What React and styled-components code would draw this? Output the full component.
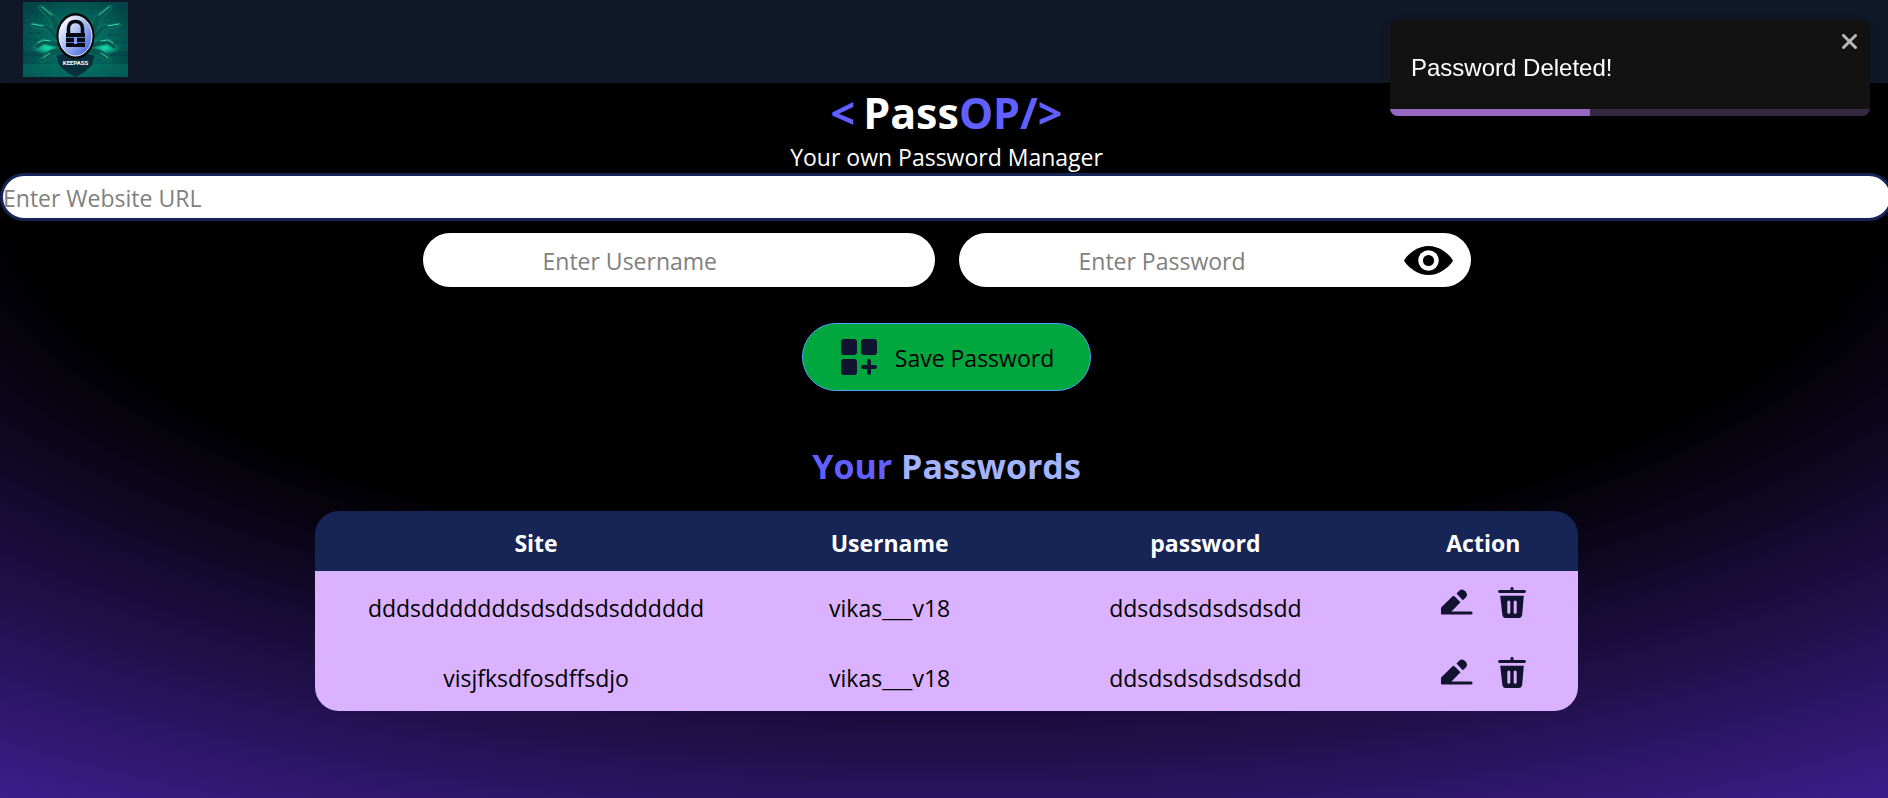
import React, { useState } from "react";
import styled, { createGlobalStyle } from "styled-components";

const Global = createGlobalStyle`
  *, *::before, *::after { box-sizing: border-box; }
  html { background: #000; }
  body {
    margin: 0;
    overflow-x: hidden;
    font-family: "Open Sans", "Noto Sans", sans-serif;
    font-size: 23px;
    line-height: 32px;
    color: #000;
  }
  h1, h2, p { margin: 0; }
  button, input { font: inherit; }
`;

const Page = styled.div`
  width: calc(100% + 5px);
  min-height: 100vh;
  background: radial-gradient(125% 125% at 50% 10%, #000 40%, #63e 100%) 0 83px / 100% 800px no-repeat;
`;

const Nav = styled.nav`
  height: 83px;
  padding: 2px 23px;
  background: #101828;
`;

const Logo = styled.svg`
  display: block;
  width: 105px;
  height: 75px;
`;

const Brand = styled.h1`
  display: flex;
  justify-content: center;
  gap: 8px;
  padding-top: 2px;
  font-size: 43px;
  line-height: 56px;
  font-weight: 700;
  color: #fff;
`;

const Accent = styled.span`
  color: ${(p) => p.$color || "#615fff"};
`;

const Tagline = styled.p`
  text-align: center;
  color: #fff;
`;

const Form = styled.form`
  display: flex;
  flex-direction: column;
  align-items: center;
`;

const UrlInput = styled.input`
  width: 100%;
  height: 48px;
  padding: 2px 0 0;
  border: 3px solid #162456;
  border-radius: 24px;
  background: #fff;
  outline: none;
  &::placeholder { color: #808080; opacity: 1; }
`;

const Fields = styled.div`
  display: flex;
  gap: 24px;
  margin-top: 12px;
`;

const Field = styled.div`
  display: flex;
  align-items: center;
  width: 512px;
  height: 54px;
  padding: 0 18px 0 120px;
  border-radius: 27px;
  background: #fff;
`;

const FieldInput = styled.input`
  flex: 1;
  min-width: 0;
  height: 100%;
  padding: 2px 0 0;
  border: 0;
  background: none;
  outline: none;
  &::placeholder { color: #808080; opacity: 1; }
`;

const IconButton = styled.button`
  display: flex;
  padding: 0;
  border: 0;
  background: none;
  color: ${(p) => p.$color || "#121331"};
  cursor: pointer;
`;

const SaveButton = styled.button`
  display: flex;
  align-items: center;
  gap: 18px;
  height: 68px;
  margin-top: 36px;
  padding: 0 36px 0 38px;
  border: 1px solid #51a2ff;
  border-radius: 34px;
  background: #00a63e;
  color: #000;
  cursor: pointer;
`;

const SaveLabel = styled.span`
  padding-top: 2px;
`;

const Heading = styled.h2`
  margin: 51px 0 21px;
  text-align: center;
  font-size: 34px;
  line-height: 48px;
  color: #615fff;
`;

const Table = styled.table`
  width: 1263px;
  max-width: 100%;
  margin: 0 auto;
  table-layout: fixed;
  border-collapse: collapse;
  border-radius: 24px;
  overflow: hidden;
  text-align: center;
`;

const Th = styled.th`
  width: ${(p) => p.$width};
  height: 60px;
  padding: 3px 0 0;
  background: #162456;
  color: #fff;
  font-weight: 700;
`;

const Td = styled.td`
  height: 70px;
  padding: 3px 0 0;
  background: #dab2ff;
`;

const Actions = styled.div`
  display: flex;
  justify-content: center;
  gap: 25px;
  padding-bottom: 11px;
`;

const Toast = styled.div`
  position: fixed;
  top: 20px;
  right: 18px;
  display: flex;
  flex-direction: column;
  width: 480px;
  height: 96px;
  border-radius: 8px;
  overflow: hidden;
  background: #121212;
  color: #fff;
  font-family: "Liberation Sans", Arial, sans-serif;
  font-size: 24px;
  box-shadow: 0 4px 12px rgba(0, 0, 0, 0.1);
`;

const ToastBody = styled.div`
  flex: 1;
  display: flex;
  justify-content: space-between;
  align-items: flex-start;
  padding: 14px 13px 0 21px;
`;

const ToastText = styled.span`
  padding-top: 17px;
  line-height: 34px;
`;

const Track = styled.div`
  height: 7px;
  background: #33283f;
`;

const Bar = styled.div`
  height: 100%;
  background: #9668c4;
`;

const Plus = () => (
  <svg width="36" height="36" viewBox="0 0 36 36" fill="#121331" aria-hidden="true">
    <rect width="16" height="16" rx="3" />
    <rect x="20" width="16" height="16" rx="3" />
    <rect y="20" width="16" height="16" rx="3" />
    <path d="M28 22v12M22 28h12" stroke="#121331" strokeWidth="4" strokeLinecap="round" />
  </svg>
);

const Eye = () => (
  <svg width="49" height="29" viewBox="0 0 49 29" aria-hidden="true">
    <path d="M0 14.500Q2.500 9.500 10 4.500Q17 0 24.500 0Q32 0 39 4.500Q46.500 9.500 49 14.500Q46.500 19.500 39 24.500Q32 29 24.500 29Q17 29 10 24.500Q2.500 19.500 0 14.500Z" fill="#000" />
    <circle cx="24.500" cy="14.500" r="10.300" fill="#fff" />
    <circle cx="24.500" cy="14.500" r="5.600" fill="#000" />
  </svg>
);

const Pencil = () => (
  <svg width="32" height="31" viewBox="0 0 32 31" fill="currentColor" aria-hidden="true">
    <path d="M13.500 9.200L19.500 15.300L10.500 24.500H30.300Q31.600 24.700 31.600 26Q31.600 27.400 30.300 27.500H1Q0 27.500 0 26.500V21.500Q0 20.700 .6 20.100L11.600 9.200Q12.500 8.300 13.500 9.200Z" />
    <path d="M15.500 6.500L18 4Q21 1 24.300 4.200Q27.500 7.500 24.800 10.500L21.800 13.300Z" />
  </svg>
);

const Trash = () => (
  <svg width="28" height="31" viewBox="0 0 28 31" fill="currentColor" aria-hidden="true">
    <path d="M12.500 3V1.400Q12.600 0 14 0Q15.400 0 15.500 1.400V3H26.500Q28 3.100 28 4.500Q28 5.900 26.500 6H1.500Q0 5.900 0 4.500Q0 3.100 1.500 3Z" />
    <path fillRule="evenodd" d="M2.200 8.700H25.800L24.200 27.500Q23.800 30.800 21 31H7.500Q4.700 30.800 4.300 27.500ZM9.300 15V25.200a1.500 1.500 0 0 0 3 0V15a1.500 1.500 0 0 0-3 0ZM15.700 15V25.200a1.500 1.500 0 0 0 3 0V15a1.500 1.500 0 0 0-3 0Z" />
  </svg>
);

const Hand = (props) => (
  <g {...props} fill="#07594f" stroke="#0c9580" strokeWidth="0.500" strokeLinejoin="round">
    <path d="M16 4Q18 2 21 5L32 13Q35 17 36 22L41 33L35 37L30 27Q29 20 26 17L17 8Z" />
    <path d="M7 23Q9 20 14 22L24 23Q30 25 33 31L41 37L38 42L29 34Q25 27 21 27L12 26Z" />
    <path d="M12 44Q14 39 20 37L31 39L41 42L40 47L29 44L21 42L14 47Q11 47 12 44Z" />
    <path d="M17 57Q19 53 27 48L38 45L42 51L30 54L20 60Q16 60 17 57Z" />
    <path d="M19 5L29 13M9 22L20 24M15 41L20 38L27 39M20 56L27 51" fill="none" stroke="#35dcb5" strokeWidth="1" strokeLinecap="round" />
  </g>
);

const KeePassLogo = () => (
  <Logo viewBox="0 0 105 75" role="img" aria-label="KeePass">
    <defs>
      <radialGradient id="scene" cx="50%" cy="52%" r="62%">
        <stop offset="0" stopColor="#08806e" />
        <stop offset="0.600" stopColor="#045f58" />
        <stop offset="1" stopColor="#034548" />
      </radialGradient>
      <linearGradient id="badge" x1="0" y1="0" x2="1" y2="1">
        <stop offset="0.150" stopColor="#f4f7ff" />
        <stop offset="0.900" stopColor="#4468dd" />
      </linearGradient>
      <radialGradient id="glow">
        <stop offset="0" stopColor="#18e0b0" />
        <stop offset="1" stopColor="#18e0b0" stopOpacity="0" />
      </radialGradient>
    </defs>
    <rect width="105" height="75" fill="url(#scene)" />
    <path d="M0 52H105" stroke="#034148" strokeWidth="5" opacity="0.600" />
    <path d="M5 31H20M85 33H102M3 38H15M90 40H103" stroke="#034148" strokeWidth="2" strokeDasharray="5 3" opacity="0.600" />
    <path d="M0 62H105V75H0Z" fill="#07816f" opacity="0.400" />
    <ellipse cx="24" cy="46" rx="15" ry="7" fill="url(#glow)" />
    <ellipse cx="82" cy="46" rx="15" ry="7" fill="url(#glow)" />
    <path d="M32 47Q52 25 73 47L69 63Q63 70 52.500 75Q42 70 36 63Z" fill="#062f3b" />
    <Hand />
    <Hand transform="translate(105 0) scale(-1 1)" />
    <ellipse cx="52.500" cy="34" rx="19" ry="23" fill="#05070c" />
    <ellipse cx="52.500" cy="34" rx="16.500" ry="20" fill="url(#badge)" stroke="#eef1ff" strokeWidth="1" />
    <path d="M45.500 31V26Q46 19.500 52.500 19.500Q59 19.500 59.500 26V31" fill="none" stroke="#080a12" strokeWidth="3.500" />
    <path d="M43 31H62V45H43Z" fill="#080a12" />
    <path d="M43 35.500H62M43 40.500H62" stroke="#5a74cf" strokeWidth="1" />
    <path d="M51 35H54V42H51Z" fill="#7f9cf0" />
    <text x="52.500" y="63" textAnchor="middle" fontFamily="Roboto, sans-serif" fontSize="6" fontWeight="700" fill="#fff">KEEPASS</text>
  </Logo>
);

const rows = [
  { site: "dddsdddddddsdsddsdsdddddd", user: "vikas___v18", password: "ddsdsdsdsdsdsdd" },
  { site: "visjfksdfosdffsdjo", user: "vikas___v18", password: "ddsdsdsdsdsdsdd" },
];

export default function App() {
  const [progress] = useState(200 / 480);
  return (
    <>
      <Global />
      <Page>
        <Nav><KeePassLogo /></Nav>
        <main>
          <Brand>
            <Accent>&lt;</Accent>
            <span>Pass<Accent>OP/&gt;</Accent></span>
          </Brand>
          <Tagline>Your own Password Manager</Tagline>
          <Form onSubmit={(e) => e.preventDefault()}>
            <UrlInput type="text" placeholder="Enter Website URL" aria-label="Website URL" />
            <Fields>
              <Field>
                <FieldInput type="text" placeholder="Enter Username" aria-label="Username" />
              </Field>
              <Field>
                <FieldInput type="password" placeholder="Enter Password" aria-label="Password" />
                <IconButton type="button" aria-label="Show password"><Eye /></IconButton>
              </Field>
            </Fields>
            <SaveButton type="submit"><Plus /><SaveLabel>Save Password</SaveLabel></SaveButton>
          </Form>
          <Heading>Your <Accent $color="#a3b3ff">Passwords</Accent></Heading>
          <Table>
            <thead>
              <tr>
                <Th $width="35%">Site</Th>
                <Th $width="21%">Username</Th>
                <Th $width="29%">password</Th>
                <Th $width="15%">Action</Th>
              </tr>
            </thead>
            <tbody>
              {rows.map((r) => (
                <tr key={r.site}>
                  <Td>{r.site}</Td>
                  <Td>{r.user}</Td>
                  <Td>{r.password}</Td>
                  <Td>
                    <Actions>
                      <IconButton type="button" aria-label="Edit"><Pencil /></IconButton>
                      <IconButton type="button" aria-label="Delete"><Trash /></IconButton>
                    </Actions>
                  </Td>
                </tr>
              ))}
            </tbody>
          </Table>
        </main>
      </Page>
      <Toast role="alert">
        <ToastBody>
          <ToastText>Password Deleted!</ToastText>
          <IconButton type="button" $color="#b8b8b8" aria-label="Close">
            <svg width="15" height="15" viewBox="0 0 15 15" aria-hidden="true">
              <path d="M1.500 1.500L13.500 13.500M13.500 1.500L1.500 13.500" stroke="currentColor" strokeWidth="3" strokeLinecap="round" />
            </svg>
          </IconButton>
        </ToastBody>
        <Track><Bar style={{ width: `${progress * 100}%` }} /></Track>
      </Toast>
    </>
  );
}
